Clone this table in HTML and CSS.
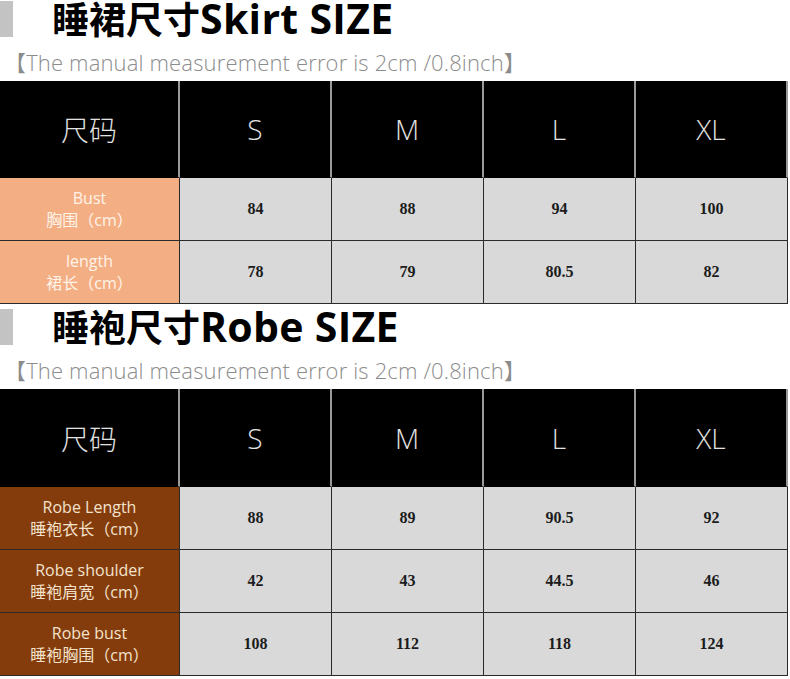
FILE: index.html
```html
<!DOCTYPE html>
<html lang="zh">
<head>
<meta charset="utf-8">
<title>Size chart</title>
<link rel="stylesheet" href="styles.css">
</head>
<body>
<div class="page">
  <section class="section first">
    <h2 class="title"><span class="bar"></span><span class="title-text">睡裙尺寸<span class="latin">Skirt SIZE</span></span></h2>
    <p class="note">【The manual measurement error is 2cm /0.8inch】</p>
    <div class="grid rows-2">
      <div class="cell head head-first">尺码</div>
      <div class="cell head">S</div>
      <div class="cell head">M</div>
      <div class="cell head">L</div>
      <div class="cell head">XL</div>

      <div class="cell label orange"><span>Bust</span><span>胸围（cm）</span></div>
      <div class="cell val">84</div>
      <div class="cell val">88</div>
      <div class="cell val">94</div>
      <div class="cell val">100</div>

      <div class="cell label orange"><span>length</span><span>裙长（cm）</span></div>
      <div class="cell val">78</div>
      <div class="cell val">79</div>
      <div class="cell val">80.5</div>
      <div class="cell val">82</div>
    </div>
  </section>

  <section class="section">
    <h2 class="title"><span class="bar"></span><span class="title-text">睡袍尺寸<span class="latin">Robe SIZE</span></span></h2>
    <p class="note">【The manual measurement error is 2cm /0.8inch】</p>
    <div class="grid rows-3">
      <div class="cell head head-first">尺码</div>
      <div class="cell head">S</div>
      <div class="cell head">M</div>
      <div class="cell head">L</div>
      <div class="cell head">XL</div>

      <div class="cell label brown"><span>Robe Length</span><span>睡袍衣长（cm）</span></div>
      <div class="cell val">88</div>
      <div class="cell val">89</div>
      <div class="cell val">90.5</div>
      <div class="cell val">92</div>

      <div class="cell label brown"><span>Robe shoulder</span><span>睡袍肩宽（cm）</span></div>
      <div class="cell val">42</div>
      <div class="cell val">43</div>
      <div class="cell val">44.5</div>
      <div class="cell val">46</div>

      <div class="cell label brown"><span>Robe bust</span><span>睡袍胸围（cm）</span></div>
      <div class="cell val">108</div>
      <div class="cell val">112</div>
      <div class="cell val">118</div>
      <div class="cell val">124</div>
    </div>
  </section>
</div>
</body>
</html>
```

FILE: styles.css
```css
html, body {
  margin: 0;
  padding: 0;
  background: #ffffff;
}

.page {
  width: 790px;
  margin-top: -4px;
}

.section {
  display: flex;
  flex-direction: column;
}

.title {
  margin: 0;
  height: 45px;
  display: flex;
  align-items: center;
  gap: 39px;
}

.bar {
  width: 13px;
  height: 36px;
  background: #c3c3c3;
  flex: none;
}

.title-text {
  font-family: "Noto Sans CJK SC", "Noto Sans", sans-serif;
  font-weight: 700;
  font-size: 37px;
  line-height: 45px;
  color: #000000;
  white-space: nowrap;
}

.latin {
  font-family: "Open Sans", "Noto Sans", sans-serif;
  font-weight: 700;
  font-size: 41px;
  letter-spacing: 0.3px;
}

.note {
  margin: 0;
  height: 40px;
  display: flex;
  align-items: center;
  padding-left: 4px;
  font-family: "Open Sans", "Noto Sans CJK SC", sans-serif;
  font-weight: 300;
  font-size: 22px;
  letter-spacing: 0.15px;
  color: #8c8c8c;
  white-space: nowrap;
}

.grid {
  display: grid;
  grid-template-columns: 180px repeat(4, 152px);
  width: 788px;
}

.rows-2 {
  grid-template-rows: 97px repeat(2, 63px);
}

.rows-3 {
  grid-template-rows: 98px repeat(3, 63px);
}

.cell {
  box-sizing: border-box;
  display: flex;
  flex-direction: column;
  align-items: center;
  justify-content: center;
  border-right: 1px solid #2a2a2a;
  border-bottom: 1px solid #2a2a2a;
}

.head {
  background: #000000;
  color: #e2e2e2;
  font-family: "Open Sans", "Noto Sans CJK SC", sans-serif;
  font-weight: 300;
  font-size: 28px;
  border-right: 2px solid #9a9a9a;
  border-bottom: 1px solid #000000;
}

.head-first {
  font-family: "Noto Sans CJK SC", sans-serif;
}

.label {
  font-family: "Open Sans", "Noto Sans CJK SC", sans-serif;
  font-size: 16px;
  line-height: 22px;
}

.orange {
  background: #f4ae83;
  color: #fff4ea;
}

.brown {
  background: #843c0c;
  color: #f4e3cc;
}

.val {
  background: #d9d9d9;
  font-family: "Liberation Serif", "Times New Roman", serif;
  font-weight: 700;
  font-size: 16px;
  color: #1c1c1c;
}
```
